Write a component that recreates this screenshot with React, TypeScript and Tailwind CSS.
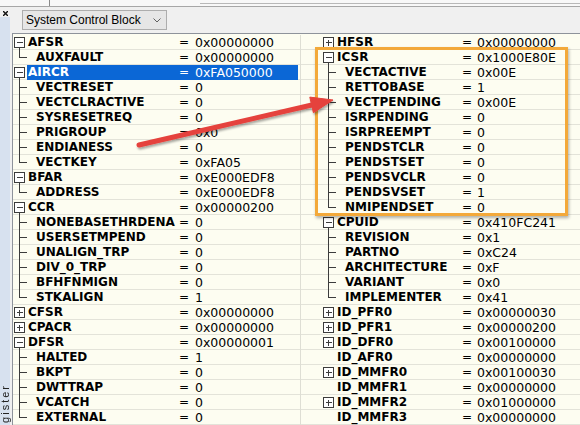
import React from 'react';

type Kind = 'open' | 'closed' | 'child' | 'last' | 'none';

interface Reg {
  name: string;
  value: string;
  kind: Kind;
  selected?: boolean;
}

const leftRegs: Reg[] = [
  { name: 'AFSR', value: '0x00000000', kind: 'open' },
  { name: 'AUXFAULT', value: '0x00000000', kind: 'last' },
  { name: 'AIRCR', value: '0xFA050000', kind: 'open', selected: true },
  { name: 'VECTRESET', value: '0', kind: 'child' },
  { name: 'VECTCLRACTIVE', value: '0', kind: 'child' },
  { name: 'SYSRESETREQ', value: '0', kind: 'child' },
  { name: 'PRIGROUP', value: '0x0', kind: 'child' },
  { name: 'ENDIANESS', value: '0', kind: 'child' },
  { name: 'VECTKEY', value: '0xFA05', kind: 'last' },
  { name: 'BFAR', value: '0xE000EDF8', kind: 'open' },
  { name: 'ADDRESS', value: '0xE000EDF8', kind: 'last' },
  { name: 'CCR', value: '0x00000200', kind: 'open' },
  { name: 'NONEBASETHRDENA', value: '0', kind: 'child' },
  { name: 'USERSETMPEND', value: '0', kind: 'child' },
  { name: 'UNALIGN_TRP', value: '0', kind: 'child' },
  { name: 'DIV_0_TRP', value: '0', kind: 'child' },
  { name: 'BFHFNMIGN', value: '0', kind: 'child' },
  { name: 'STKALIGN', value: '1', kind: 'last' },
  { name: 'CFSR', value: '0x00000000', kind: 'closed' },
  { name: 'CPACR', value: '0x00000000', kind: 'closed' },
  { name: 'DFSR', value: '0x00000001', kind: 'open' },
  { name: 'HALTED', value: '1', kind: 'child' },
  { name: 'BKPT', value: '0', kind: 'child' },
  { name: 'DWTTRAP', value: '0', kind: 'child' },
  { name: 'VCATCH', value: '0', kind: 'child' },
  { name: 'EXTERNAL', value: '0', kind: 'last' },
];

const rightRegs: Reg[] = [
  { name: 'HFSR', value: '0x00000000', kind: 'closed' },
  { name: 'ICSR', value: '0x1000E80E', kind: 'open' },
  { name: 'VECTACTIVE', value: '0x00E', kind: 'child' },
  { name: 'RETTOBASE', value: '1', kind: 'child' },
  { name: 'VECTPENDING', value: '0x00E', kind: 'child' },
  { name: 'ISRPENDING', value: '0', kind: 'child' },
  { name: 'ISRPREEMPT', value: '0', kind: 'child' },
  { name: 'PENDSTCLR', value: '0', kind: 'child' },
  { name: 'PENDSTSET', value: '0', kind: 'child' },
  { name: 'PENDSVCLR', value: '0', kind: 'child' },
  { name: 'PENDSVSET', value: '1', kind: 'child' },
  { name: 'NMIPENDSET', value: '0', kind: 'last' },
  { name: 'CPUID', value: '0x410FC241', kind: 'open' },
  { name: 'REVISION', value: '0x1', kind: 'child' },
  { name: 'PARTNO', value: '0xC24', kind: 'child' },
  { name: 'ARCHITECTURE', value: '0xF', kind: 'child' },
  { name: 'VARIANT', value: '0x0', kind: 'child' },
  { name: 'IMPLEMENTER', value: '0x41', kind: 'last' },
  { name: 'ID_PFR0', value: '0x00000030', kind: 'closed' },
  { name: 'ID_PFR1', value: '0x00000200', kind: 'closed' },
  { name: 'ID_DFR0', value: '0x00100000', kind: 'closed' },
  { name: 'ID_AFR0', value: '0x00000000', kind: 'none' },
  { name: 'ID_MMFR0', value: '0x00100030', kind: 'closed' },
  { name: 'ID_MMFR1', value: '0x00000000', kind: 'none' },
  { name: 'ID_MMFR2', value: '0x01000000', kind: 'closed' },
  { name: 'ID_MMFR3', value: '0x00000000', kind: 'none' },
];

const isTop = (k: Kind) => k === 'open' || k === 'closed' || k === 'none';

// tree connector: expander box or branch line, one row high
const TreeGlyph = ({ kind }: { kind: Kind }) => (
  <svg width="14" height="15" viewBox="0 0 14 15" className="shrink-0" stroke="#3c3c3c" strokeWidth="1" shapeRendering="crispEdges" fill="none">
    {(kind === 'open' || kind === 'closed') && (
      <>
        <rect x="1.5" y="2.5" width="10" height="10" fill="#fff" />
        <line x1="3.5" y1="7.5" x2="10" y2="7.5" />
        {kind === 'closed' && <line x1="6.5" y1="4.5" x2="6.5" y2="11" />}
        {kind === 'open' && <line x1="6.5" y1="12.5" x2="6.5" y2="15" />}
      </>
    )}
    {kind === 'child' && (
      <>
        <line x1="6.5" y1="0" x2="6.5" y2="15" />
        <line x1="6.5" y1="7.5" x2="14" y2="7.5" />
      </>
    )}
    {kind === 'last' && (
      <>
        <line x1="6.5" y1="0" x2="6.5" y2="7.5" />
        <line x1="6.5" y1="7.5" x2="14" y2="7.5" />
      </>
    )}
  </svg>
);

const LeftCell = ({ r }: { r: Reg }) => (
  <div className="flex w-[288px] shrink-0 border-r border-[#deded4] pr-[2px]">
    <TreeGlyph kind={r.kind} />
    <div className={`flex w-[271px] ${r.selected ? 'bg-[#0b67d6] text-white' : 'text-black'}`}>
      <span className={`w-[152px] shrink-0 whitespace-nowrap font-bold ${isTop(r.kind) ? 'pl-px' : 'pl-[9px]'}`}>{r.name}</span>
      <span className="w-[16px] shrink-0">=</span>
      <span className="whitespace-nowrap text-[12.5px]">{r.value}</span>
    </div>
  </div>
);

const RightCell = ({ r }: { r: Reg }) => (
  <div className="flex flex-1 text-black">
    <div className="w-[21px] shrink-0" />
    <TreeGlyph kind={r.kind} />
    <span className={`w-[126px] shrink-0 whitespace-nowrap font-bold ${isTop(r.kind) ? 'pl-px' : 'pl-[9px]'}`}>{r.name}</span>
    <span className="w-[15px] shrink-0">=</span>
    <span className="whitespace-nowrap text-[12.5px]">{r.value}</span>
  </div>
);

export default function App() {
  return (
    <div className="relative w-[580px] h-[425px] overflow-hidden bg-[#f0f0f0] flex flex-col font-['DejaVu_Sans',sans-serif] text-[12px]">
      {/* window top edge */}
      <div className="h-[7px] shrink-0 flex border-b border-[#a7a7a7] bg-[#f8f8f8]">
        <div className="w-[50px] border-r border-[#8a8a8a]" />
        <div className="w-[150px]" />
        <div className="flex-1 h-[4px] border-b border-[#b8b8b8]" />
      </div>

      <div className="flex flex-1 min-h-0">
        {/* docked tab strip */}
        <div className="w-[12px] shrink-0 flex flex-col">
          <div className="h-[10px] shrink-0 pl-[3px] pt-[4px]">
            <svg width="5" height="5" viewBox="0 0 5 5" stroke="#111" strokeWidth="1.4">
              <line x1="0" y1="0" x2="5" y2="5" />
              <line x1="5" y1="0" x2="0" y2="5" />
            </svg>
          </div>
          <div className="flex-1 w-[10px] bg-[#d7e1ef] flex flex-col items-center justify-end pb-[2px]">
            <span className="[writing-mode:vertical-rl] rotate-180 leading-[11px] text-[11px] tracking-[2px] text-[#222] font-['Liberation_Sans',sans-serif]">
              gister
            </span>
          </div>
        </div>

        <div className="flex flex-col flex-1 min-w-0">
          {/* toolbar */}
          <div className="h-[26px] shrink-0 pl-[10px] pt-[3px]">
            <div className="w-[145px] h-[20px] border border-[#adadad] bg-[#e6e6e6] flex items-center justify-between pl-[3px] pr-[5px] font-['Liberation_Sans',sans-serif] text-[12px] text-black">
              <span>System Control Block</span>
              <svg width="8" height="5" viewBox="0 0 8 5" fill="none" stroke="#606060" strokeWidth="1">
                <polyline points="0.5,0.5 4,4 7.5,0.5" />
              </svg>
            </div>
          </div>

          {/* register tree */}
          <div className="flex-1 min-h-0 border-t border-l border-[#8e939b] bg-[#fdfdf1] pt-px">
            {leftRegs.map((r, i) => (
              <div
                key={r.name}
                className="flex h-[15px] leading-[15px] bg-[linear-gradient(to_top,#e3e3d9_1px,transparent_1px)]"
              >
                <LeftCell r={r} />
                <RightCell r={rightRegs[i]} />
              </div>
            ))}
          </div>
        </div>
      </div>

      {/* annotation: highlight box */}
      <div className="absolute left-[315px] top-[47px] w-[253px] h-[169px] border-[3px] border-[#f3a93a] shadow-[1px_2px_3px_rgba(0,0,0,0.3)] pointer-events-none" />

      {/* annotation: arrow */}
      <svg className="absolute left-0 top-0 pointer-events-none" width="580" height="425" viewBox="0 0 580 425">
        <defs>
          <filter id="arrowShadow" x="-10%" y="-50%" width="120%" height="200%">
            <feDropShadow dx="1" dy="2" stdDeviation="1.2" floodColor="#000" floodOpacity="0.35" />
          </filter>
        </defs>
        <g filter="url(#arrowShadow)" fill="#e5433d" stroke="#e5433d">
          <line x1="139" y1="145" x2="314" y2="104.5" strokeWidth="5" strokeLinecap="round" />
          <polygon points="333,100 313.4,112.7 309.8,97.1" strokeWidth="1" strokeLinejoin="round" />
        </g>
      </svg>
    </div>
  );
}
